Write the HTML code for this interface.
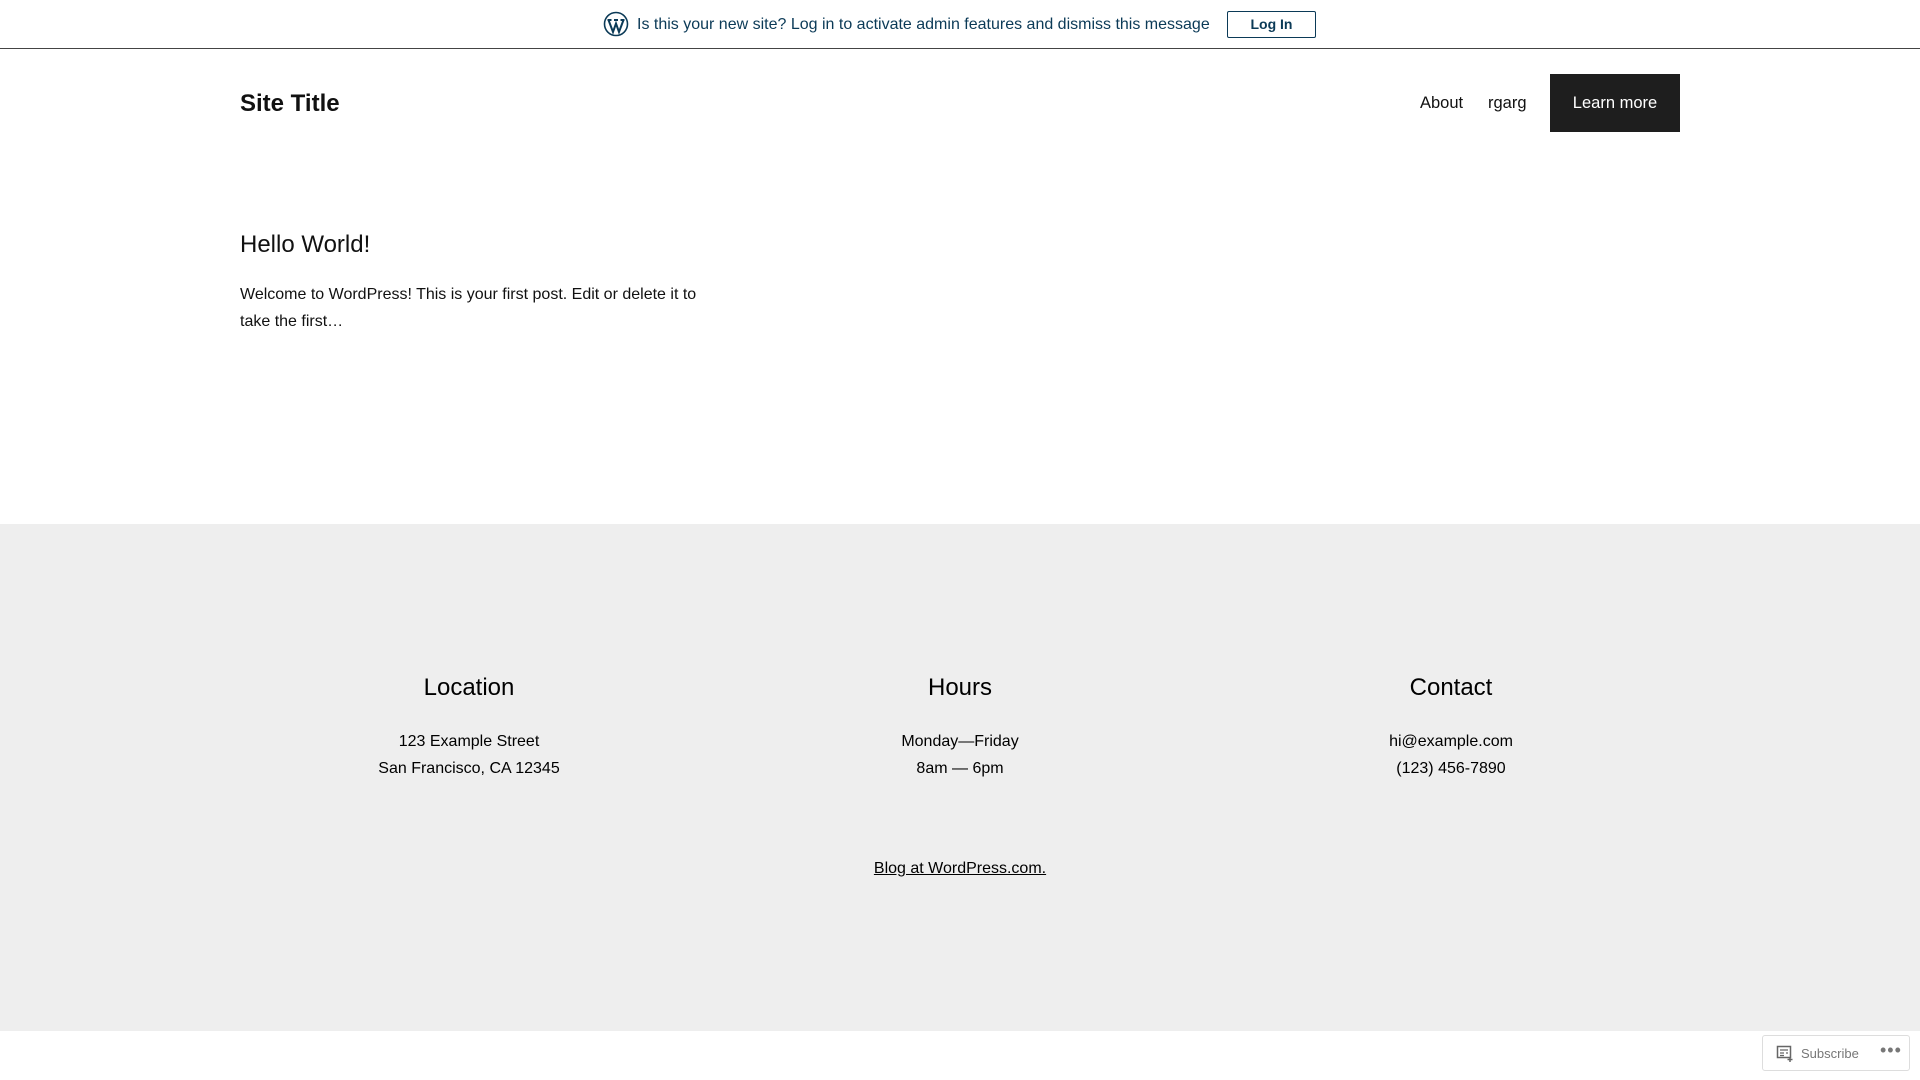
<!DOCTYPE html>
<html><head><meta charset="utf-8"><style>
*{margin:0;padding:0;box-sizing:border-box}
html,body{width:1920px;height:1080px;overflow:hidden;background:#fff;font-family:"Liberation Sans",Arial,sans-serif;color:#111}
.bar{position:absolute;top:0;left:0;width:1920px;height:49px;border-bottom:1px solid #444;background:#fff}
.bar .msg{position:absolute;left:637px;top:16px;font-size:16px;color:#0b3a57}
.bar svg{position:absolute;left:603px;top:11px}
.bar .btn{position:absolute;left:1227px;top:11px;width:89px;height:27px;border:1px solid #0b3a57;border-radius:2px;font-size:14px;font-weight:bold;color:#0b3a57;text-align:center;line-height:25px}
.title{position:absolute;left:240px;top:90px;font-size:24px;font-weight:bold;color:#111}
.nav{position:absolute;top:94px;font-size:16.5px;color:#111}
.lm{position:absolute;left:1550px;top:74px;width:130px;height:58px;background:#1e1e1e;color:#fff;font-size:16.5px;text-align:center;line-height:58px}
h2.post{position:absolute;left:240px;top:231px;font-size:24px;font-weight:normal}
p.ex{position:absolute;left:240px;top:281px;width:480px;font-size:16px;line-height:27px}
.foot{position:absolute;top:524px;left:0;width:1920px;height:507px;background:#eeeeee}
.col{position:absolute;top:150px;width:400px;text-align:center;margin-left:-200px}
.col h3{font-size:24px;font-weight:normal;color:#000;margin-bottom:26px}
.col p{font-size:16px;line-height:27px;color:#000}
.blog{position:absolute;top:336px;left:0;width:1920px;text-align:center;font-size:16px;text-decoration:underline;color:#000}
.sub{position:absolute;left:1762px;top:1035px;width:148px;height:36px;border:1px solid #ddd;border-radius:3px;background:#fff;font-size:13px;color:#777}
</style></head><body>
<div class="bar">
<svg width="26" height="26" viewBox="0 0 26 26"><circle cx="13" cy="13" r="11.5" fill="none" stroke="#0b3a57" stroke-width="1.6"/><path d="M5.5 9 L10 21 L13 12.5 L16 21 L20.5 9 M4.5 9h4 M11 9h4 M17.5 9h4" fill="none" stroke="#0b3a57" stroke-width="2"/></svg>
<div class="msg">Is this your new site? Log in to activate admin features and dismiss this message</div>
<div class="btn">Log In</div>
</div>
<div class="title">Site Title</div>
<div class="nav" style="left:1420px">About</div>
<div class="nav" style="left:1488px">rgarg</div>
<div class="lm">Learn more</div>
<h2 class="post">Hello World!</h2>
<p class="ex">Welcome to WordPress! This is your first post. Edit or delete it to take the first…</p>
<div class="foot">
<div class="col" style="left:469px"><h3>Location</h3><p>123 Example Street<br>San Francisco, CA 12345</p></div>
<div class="col" style="left:960px"><h3>Hours</h3><p>Monday—Friday<br>8am — 6pm</p></div>
<div class="col" style="left:1451px"><h3>Contact</h3><p>hi@example.com<br>(123) 456-7890</p></div>
<div class="blog">Blog at WordPress.com.</div>
</div>
<div class="sub">
<svg style="position:absolute;left:13px;top:9px" width="18" height="18" viewBox="0 0 18 18"><rect x="1.5" y="1.5" width="13" height="11" fill="none" stroke="#666" stroke-width="1.5"/><path d="M4 5h8M4 8h4M10 8h2M4 10.5h4" stroke="#666" stroke-width="1.2"/><path d="M14 12v5M11.5 14.5h5" stroke="#666" stroke-width="1.5"/></svg>
<span style="position:absolute;left:38px;top:10px">Subscribe</span>
<span style="position:absolute;left:117px;top:4px;font-size:18px;letter-spacing:1px">•••</span>
</div>
</body></html>
